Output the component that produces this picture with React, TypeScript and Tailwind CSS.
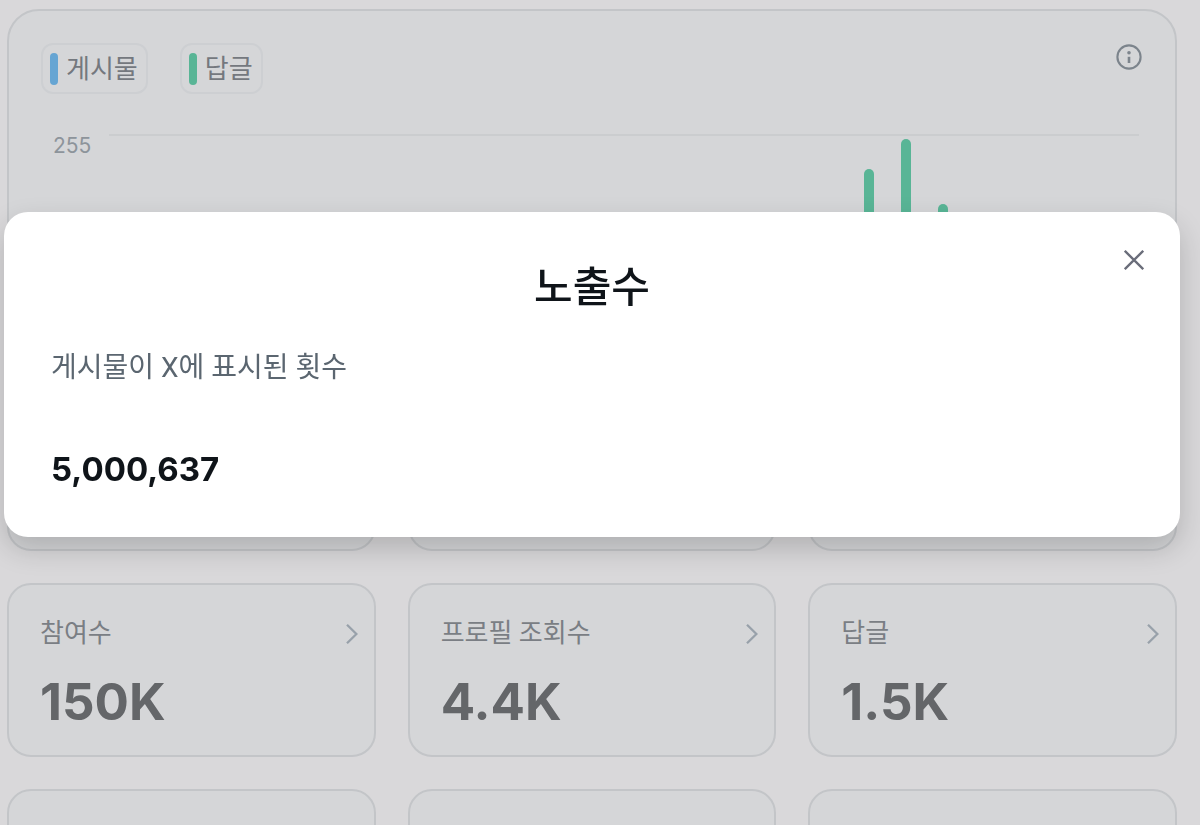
import React from 'react';

type Stat = { label: string; value: string } | null;

const stats: Stat[] = [
  null,
  null,
  null,
  { label: '참여수', value: '150K' },
  { label: '프로필 조회수', value: '4.4K' },
  { label: '답글', value: '1.5K' },
  null,
  null,
  null,
];

// replies per day, scaled to 255
const replies = [0, 0, 0, 0, 0, 0, 0, 0, 0, 0, 0, 0, 0, 0, 0, 0, 0, 0, 0, 0, 206, 251, 156, 0, 0, 0, 0];

const legend = [
  { label: '게시물', color: 'bg-[#66a5d3]' },
  { label: '답글', color: 'bg-[#59b596]' },
];

function InfoIcon() {
  return (
    <svg viewBox="0 0 26 26" className="w-[26px] h-[26px]" fill="none" stroke="currentColor">
      <circle cx="13" cy="13" r="11.6" strokeWidth="2.1" />
      <circle cx="13" cy="8.8" r="1.8" fill="currentColor" stroke="none" />
      <path d="M13 12.8v6.2" strokeWidth="2.6" />
    </svg>
  );
}

function ChevronIcon() {
  return (
    <svg viewBox="0 0 12 20" className="w-3 h-5" fill="none" stroke="currentColor" strokeWidth="2.3">
      <path d="M1 .8l9.4 9.2L1 19.2" />
    </svg>
  );
}

function CloseIcon() {
  return (
    <svg viewBox="0 0 20 20" className="w-5 h-5" fill="none" stroke="currentColor" strokeWidth="2.3">
      <path d="M.8.8l18.4 18.4M19.2.8L.8 19.2" />
    </svg>
  );
}

function ChartCard() {
  return (
    <section className="h-[335px] flex flex-col rounded-[32px] border-2 border-[#c3c5c8] bg-[#d5d6d8] pt-8 px-8">
      <div className="flex justify-between items-start">
        <div className="flex gap-8">
          {legend.map((item) => (
            <button
              key={item.label}
              className="h-[51px] flex items-center gap-2 pl-[7px] pr-2 rounded-xl border-2 border-[#cdcfd2] text-[26px] leading-8 text-[#74787e]"
            >
              <span className={`w-2 h-8 rounded-full ${item.color}`} />
              {item.label}
            </button>
          ))}
        </div>
        <button aria-label="정보" className="mt-px mr-px text-[#7c848c]">
          <InfoIcon />
        </button>
      </div>

      <div className="flex-1 flex mt-10 mb-8 gap-4 pl-3 pr-1">
        <span className="w-10 text-[21px] leading-6 text-[#8d949b] font-[Inter]">255</span>
        <div className="flex-1 border-t-2 border-[#cbcdcf]">
          <div className="h-full grid grid-cols-27 ml-0.5 mr-[30px]">
            {replies.map((count, i) => (
              <div key={i} className="flex items-end justify-center">
                <div
                  className="w-[10px] rounded-t-full bg-[#59b596]"
                  style={{ height: `${(count / 255) * 100}%` }}
                />
              </div>
            ))}
          </div>
        </div>
      </div>
    </section>
  );
}

function StatCard({ stat }: { stat: Stat }) {
  return (
    <article className="h-[174px] rounded-3xl border-2 border-[#c3c5c8] bg-[#d5d6d8] pt-8 pl-[31px] pr-4">
      {stat && (
        <>
          <div className="flex items-start justify-between text-[26px] leading-8 text-[#7a7e84]">
            <h3>{stat.label}</h3>
            <button aria-label={stat.label} className="mt-[7px] text-[#98a1aa]">
              <ChevronIcon />
            </button>
          </div>
          <p className="mt-6 text-[51px] leading-[58px] font-bold text-[#646669] font-[Inter]">{stat.value}</p>
        </>
      )}
    </article>
  );
}

function ImpressionsDialog() {
  return (
    <div className="fixed inset-0 pt-[212px] pl-1 pr-5">
      <div
        role="dialog"
        aria-modal="true"
        aria-labelledby="dialog-title"
        className="relative rounded-3xl bg-white pt-12 px-[47px] pb-[46px] shadow-[0_12px_28px_rgba(0,0,0,0.18)]"
      >
        <button aria-label="닫기" className="absolute top-[38px] right-9 text-[#6a6d7a]">
          <CloseIcon />
        </button>
        <h2 id="dialog-title" className="text-center text-[42px] leading-[56px] font-medium text-[#0f1419]">
          노출수
        </h2>
        <p className="mt-8 text-[28px] leading-10 text-[#5b6670]">게시물이 X에 표시된 횟수</p>
        <p className="mt-[59px] text-[33px] leading-11 font-bold text-[#0f1419] font-[Inter]">5,000,637</p>
      </div>
    </div>
  );
}

export default function App() {
  return (
    <div className="h-screen overflow-hidden bg-[#d9d8da] font-[Roboto,'Noto_Sans_CJK_KR',sans-serif]">
      <main className="pt-[9px] pl-[7px] pr-[23px]">
        <ChartCard />
        <div className="mt-[33px] grid grid-cols-3 gap-8">
          {stats.map((stat, i) => (
            <StatCard key={i} stat={stat} />
          ))}
        </div>
      </main>
      <ImpressionsDialog />
    </div>
  );
}
